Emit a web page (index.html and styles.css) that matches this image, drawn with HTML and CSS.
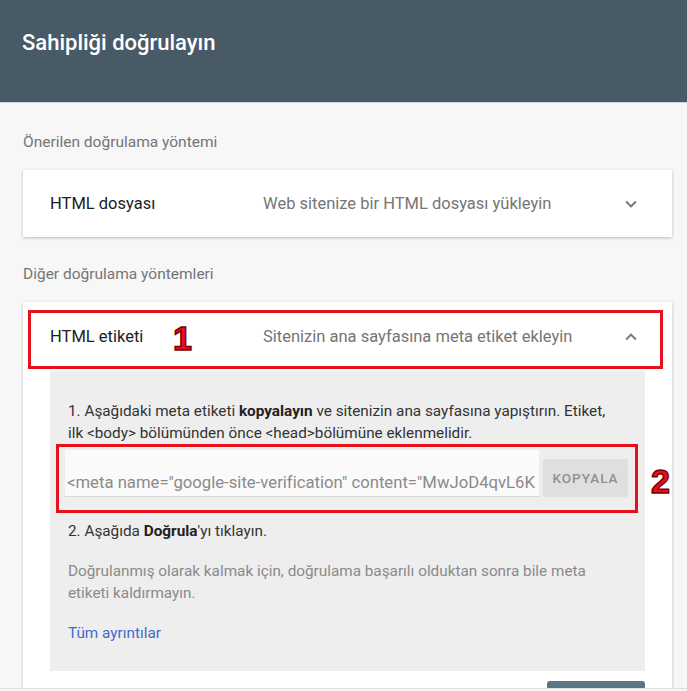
FILE: index.html
```html
<!doctype html>
<html lang="tr">
  <head>
    <meta charset="UTF-8" />
    <meta name="viewport" content="width=device-width, initial-scale=1.0" />
    <title>Sahipliği doğrulayın</title>
    <link rel="stylesheet" href="styles.css">
  </head>
  <body>
    <div class="viewport">
      <header class="top-bar">
        <h1>Sahipliği doğrulayın</h1>
      </header>

      <main class="content">
        <p class="section-label">Önerilen doğrulama yöntemi</p>

        <div class="method-card">
          <div class="method-head">
            <span class="method-name">HTML dosyası</span>
            <span class="method-desc">Web sitenize bir HTML dosyası yükleyin</span>
            <svg class="chevron" viewBox="0 0 24 24" width="22" height="22">
              <path d="M7.41 8.59 12 13.17l4.59-4.58L18 10l-6 6-6-6z" />
            </svg>
          </div>
        </div>

        <p class="section-label">Diğer doğrulama yöntemleri</p>

        <div class="method-card open">
          <div class="method-head">
            <span class="method-name">HTML etiketi</span>
            <span class="method-desc">Sitenizin ana sayfasına meta etiket ekleyin</span>
            <svg class="chevron" viewBox="0 0 24 24" width="22" height="22">
              <path d="M7.41 15.41 12 10.83l4.59 4.58L18 14l-6-6-6 6z" />
            </svg>
            <span class="mark mark-head"></span>
            <span class="mark-num num-one">1</span>
          </div>

          <div class="method-body">
            <p class="step">
              1. Aşağıdaki meta etiketi <b>kopyalayın</b> ve sitenizin ana sayfasına yapıştırın. Etiket,
              ilk &lt;body&gt; bölümünden önce &lt;head&gt;bölümüne eklenmelidir.
            </p>

            <div class="code-row">
              <div class="code-field">&lt;meta name="google-site-verification" content="MwJoD4qvL6K</div>
              <button class="copy-btn">KOPYALA</button>
              <span class="mark mark-code"></span>
              <span class="mark-num num-two">2</span>
            </div>

            <p class="step">2. Aşağıda <b>Doğrula</b>'yı tıklayın.</p>

            <p class="note">
              Doğrulanmış olarak kalmak için, doğrulama başarılı olduktan sonra bile meta
              etiketi kaldırmayın.
            </p>

            <a class="details-link" href="#">Tüm ayrıntılar</a>
          </div>

          <div class="method-actions">
            <button class="verify-btn">DOĞRULA</button>
          </div>
        </div>
      </main>
    </div>
  </body>
</html>
```

FILE: styles.css
```css
body {
  margin: 0;
  font-family: Roboto, "Noto Sans", sans-serif;
  background: #f7f7f7;
  color: #212121;
}

.viewport {
  height: 688px;
  overflow: hidden;
  border-bottom: 1px solid #dcdcdc;
}

.top-bar {
  height: 102px;
  background: #475a65;
  border-bottom: 1px solid #c9d6dc;
}

.top-bar h1 {
  margin: 0;
  padding: 30px 0 0 22px;
  font-size: 22px;
  font-weight: 500;
  line-height: 26px;
  color: #fff;
}

.content {
  padding: 0 15px 0 23px;
}

.section-label {
  margin: 0;
  padding: 29px 0 18px 0;
  font-size: 15.5px;
  line-height: 20px;
  color: #757575;
}

.method-card {
  background: #fff;
  box-shadow: 0 1px 3px rgba(0, 0, 0, 0.25);
}

.method-card + .section-label {
  padding-top: 27px;
}

.method-head {
  position: relative;
  display: flex;
  align-items: center;
  height: 67px;
  padding: 0 30px 0 27px;
}

.open .method-head {
  height: 69px;
}

.method-name {
  width: 213px;
  font-size: 16.5px;
  color: #212121;
}

.method-desc {
  flex: 1;
  font-size: 16.5px;
  color: #757575;
}

.chevron {
  fill: #757575;
}

/* red annotation boxes */
.mark {
  position: absolute;
  border: 3px solid #e3121b;
  pointer-events: none;
}

.mark-head {
  left: 5px;
  right: 9px;
  top: 8px;
  bottom: 2px;
}

.mark-num {
  position: absolute;
  font-family: "Liberation Sans", Arial, sans-serif;
  font-weight: 700;
  font-size: 34px;
  line-height: 34px;
  color: #e8101a;
  -webkit-text-stroke: 1.5px #7a0006;
}

.num-one {
  left: 150px;
  top: 19px;
}

.method-body {
  margin: 0 27px;
  padding: 29px 30px 27px 18px;
  background: #eeeeee;
}

.step {
  margin: 0;
  font-size: 15.3px;
  line-height: 22px;
  color: #333;
}

.step b {
  font-weight: 700;
  color: #212121;
}

.code-row {
  position: relative;
  display: flex;
  align-items: flex-end;
  gap: 4px;
  margin: 6px -13px 23px -3px;
}

.code-field {
  flex: 1;
  height: 47px;
  padding: 0 0 1px 2px;
  box-sizing: border-box;
  background: #fafafa;
  border-bottom: 1px solid #d6d6d6;
  font-size: 16.7px;
  line-height: 24px;
  display: flex;
  align-items: flex-end;
  color: #8a8a8a;
  white-space: nowrap;
  overflow: hidden;
}

.copy-btn {
  width: 85px;
  height: 38px;
  border: none;
  border-radius: 2px;
  background: #dfdfdf;
  font-family: Roboto, sans-serif;
  font-size: 13.5px;
  font-weight: 500;
  letter-spacing: 1px;
  color: #8f8f8f;
}

.mark-code {
  left: -9px;
  right: -10px;
  top: -6px;
  bottom: -16px;
}

.num-two {
  right: -42px;
  top: 14px;
}

.note {
  margin: 18px 0 0 0;
  font-size: 15.3px;
  line-height: 22px;
  color: #8a8a8a;
}

.details-link {
  display: inline-block;
  margin-top: 18px;
  font-size: 15.3px;
  line-height: 22px;
  color: #3f6bd0;
  text-decoration: none;
}

.method-actions {
  display: flex;
  justify-content: flex-end;
  padding: 10px 27px 12px 27px;
}

.verify-btn {
  width: 98px;
  height: 36px;
  border: none;
  border-radius: 3px;
  background: #5b7583;
  color: #fff;
  font-family: Roboto, sans-serif;
  font-size: 14px;
  font-weight: 500;
}
```
